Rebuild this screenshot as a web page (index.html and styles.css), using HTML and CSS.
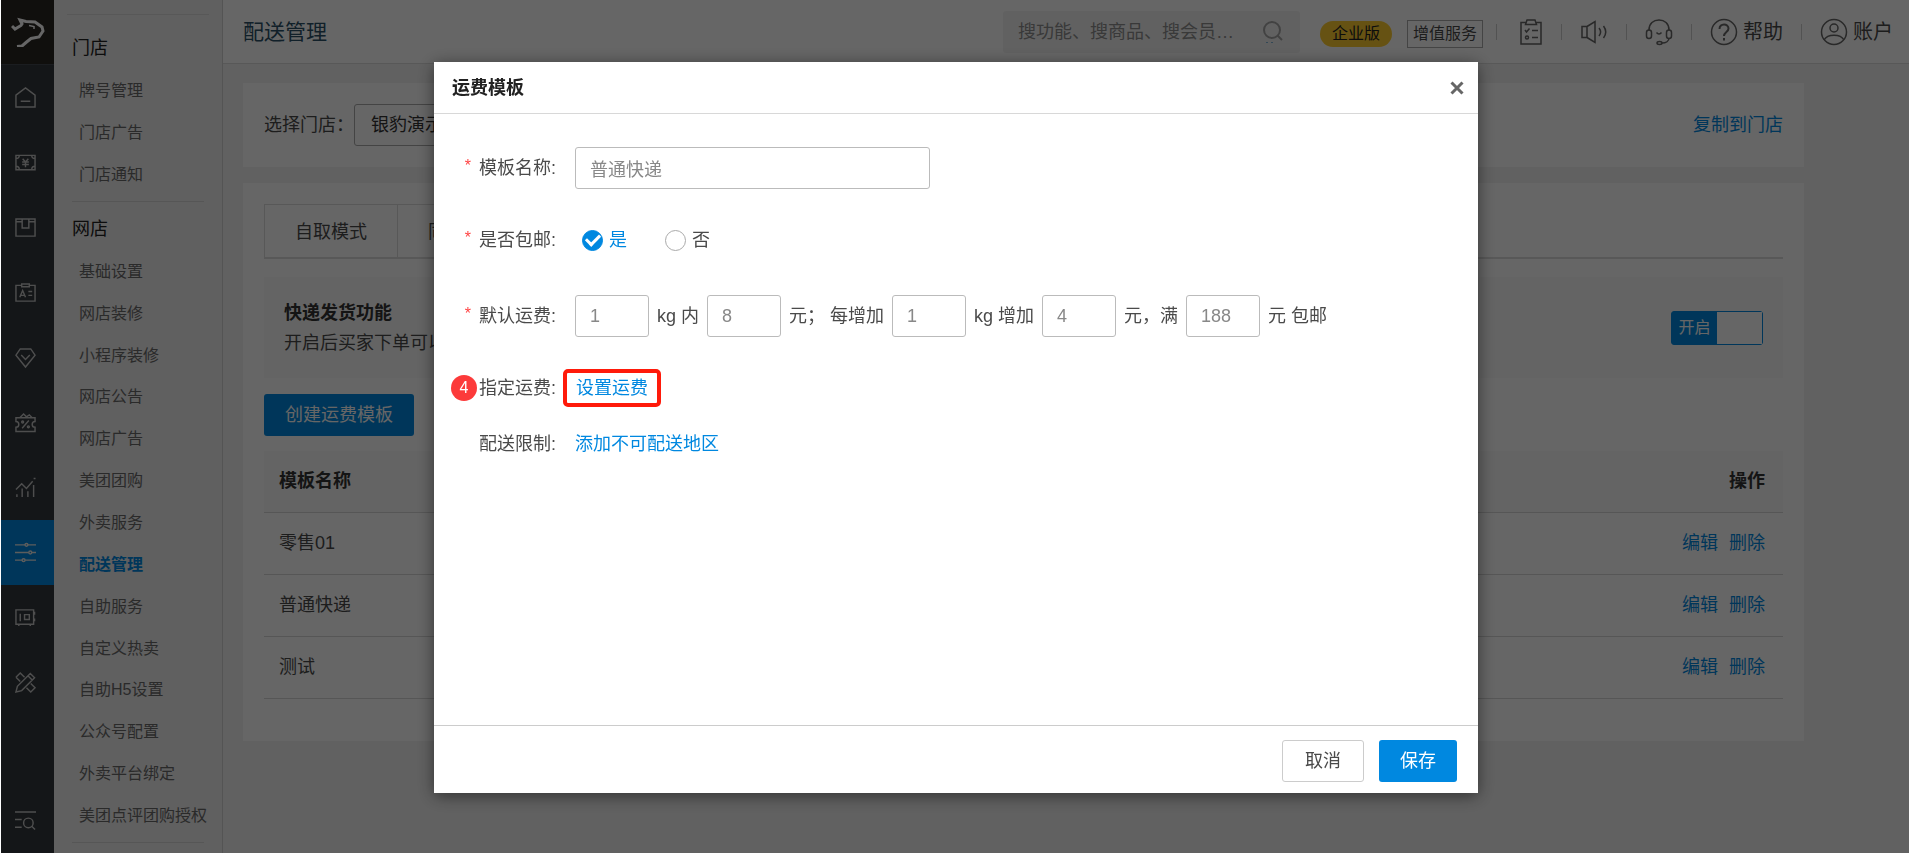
FILE: index.html
```html
<!DOCTYPE html>
<html lang="zh-CN">
<head>
<meta charset="utf-8">
<meta name="viewport" content="width=device-width, initial-scale=1">
<title>配送管理</title>
<link rel="stylesheet" href="styles.css">
</head>
<body>
<div class="app">
  <nav class="rail" aria-label="主导航">
    <a class="rail-logo" href="#" aria-label="首页">
      <svg width="34" height="30" viewBox="0 0 34 30" fill="none" stroke="currentColor" stroke-width="3"><path d="M1 9l3 3 6-3.500 1-1.500-2-4 6 1.500 9 .5 7 5 1 4-4 6-8 1.500-5 4-4 3.500-5 .5"/><path d="M18 8.500l5 1v2.500" stroke-width="1.500"/></svg>
    </a>
    <a class="rail-item" href="#" aria-label="主页"><svg class="rail-icon" viewBox="0 0 22 22"><path d="M1 8.500L11 1l10 7.500V21H1zM6 15h10"/></svg></a>
    <a class="rail-item" href="#" aria-label="收银"><svg class="rail-icon" viewBox="0 0 22 22"><path d="M1 3.500h20v15H1zM1 7c2 0 3.500-1.500 3.500-3.500M21 7c-2 0-3.500-1.500-3.500-3.500M1 15c2 0 3.500 1.500 3.500 3.500M21 15c-2 0-3.500 1.500-3.500 3.500M8 7l3 3.500L14 7M11 10.500V16M7.500 10.500h7M7.500 13h7"/></svg></a>
    <a class="rail-item" href="#" aria-label="商品"><svg class="rail-icon" viewBox="0 0 22 22"><path d="M1 2h20v18H1zM1 5h6M15 5h6M7.500 2v9.500h7V2"/></svg></a>
    <a class="rail-item" href="#" aria-label="会员"><svg class="rail-icon" viewBox="0 0 22 22"><path d="M7 3.500H1V20h20V3.500h-6M7 2h8v3H7zM5 16l3-7 3 7M6 14h4M14 10h4M14 14h4"/></svg></a>
    <a class="rail-item" href="#" aria-label="权益"><svg class="rail-icon" viewBox="0 0 22 22"><path d="M5.500 2h11L21 8.500 11 21 1 8.500zM6.500 8.500L11 13l4.500-4.500"/></svg></a>
    <a class="rail-item" href="#" aria-label="营销"><svg class="rail-icon" viewBox="0 0 22 22"><path d="M1 6h20v4c-2 0-3 1.200-3 3s1 3 3 3v4.500H1V16c2 0 3-1.200 3-3s-1-3-3-3zM5 6l4-4 3 3 3-2 3 3M7.500 17l7-8"/><circle cx="8" cy="10.500" r="1"/><circle cx="14" cy="15.500" r="1"/></svg></a>
    <a class="rail-item" href="#" aria-label="报表"><svg class="rail-icon" viewBox="0 0 22 22"><path d="M1 13l6-6 5 5 6.500-7.500M2 21v-3M7.500 21v-9M13.500 21v-6M19.500 21V8.500M19.500 1.500h2"/></svg></a>
    <a class="rail-item rail-item-active" href="#" aria-label="设置"><svg class="rail-icon" viewBox="0 0 22 22"><path d="M0 3h22M0 11h22M0 19h22"/><g class="rail-knob"><circle cx="12" cy="3" r="1.500"/><circle cx="16" cy="11" r="1.500"/><circle cx="9" cy="19" r="1.500"/></g></svg></a>
    <a class="rail-item" href="#" aria-label="保险柜"><svg class="rail-icon" viewBox="0 0 22 22"><path d="M1 3h18.500v15H1zM5.500 7v8M10 8h5v5h-5zM20.500 5v3M20.500 12v3M4 18v2M16 18v2"/></svg></a>
    <a class="rail-item" href="#" aria-label="工具"><svg class="rail-icon" viewBox="0 0 22 22"><path d="M1 21l1.500-6L16 1.500 20.500 6 7 19.500zM1 5.500L5.500 1 10 5.500M5.500 10L1 5.500M12 16.500l4.500 4.500 4.500-4.500-4.500-4.500M13.500 4l4.500 4.500"/></svg></a>
    <a class="rail-item rail-item-last" href="#" aria-label="查找功能"><svg class="rail-icon" viewBox="0 0 22 22"><path d="M0 2h22M0 10h7M0 18h7"/><circle cx="14" cy="13.500" r="5"/><path d="M17.500 17l3.500 3.500"/></svg></a>
  </nav>

  <aside class="side">
    <div class="side-top"></div>
    <section class="side-group">
      <h2 class="side-title">门店</h2>
      <ul class="side-list">
        <li><a href="#">牌号管理</a></li>
        <li><a href="#">门店广告</a></li>
        <li><a href="#">门店通知</a></li>
      </ul>
    </section>
    <section class="side-group side-group-fill">
      <h2 class="side-title">网店</h2>
      <ul class="side-list">
        <li><a href="#">基础设置</a></li>
        <li><a href="#">网店装修</a></li>
        <li><a href="#">小程序装修</a></li>
        <li><a href="#">网店公告</a></li>
        <li><a href="#">网店广告</a></li>
        <li><a href="#">美团团购</a></li>
        <li><a href="#">外卖服务</a></li>
        <li><a class="side-active" href="#">配送管理</a></li>
        <li><a href="#">自助服务</a></li>
        <li><a href="#">自定义热卖</a></li>
        <li><a href="#">自助H5设置</a></li>
        <li><a href="#">公众号配置</a></li>
        <li><a href="#">外卖平台绑定</a></li>
        <li><a href="#">美团点评团购授权</a></li>
      </ul>
    </section>
  </aside>

  <div class="page">
    <header class="top">
      <h1 class="top-title">配送管理</h1>
      <label class="search">
        <input class="search-input" type="search" aria-label="搜索" placeholder="搜功能、搜商品、搜会员…">
        <svg width="22" height="24" viewBox="0 0 22 24" fill="none" stroke="#a6a6a6" stroke-width="2"><circle cx="10" cy="10" r="8"/><path d="M15.500 15.500L20 20"/><path d="M4 22.500h2M9 22.500h2" stroke="#7fb4d8" stroke-width="1"/></svg>
      </label>
      <div class="plans">
        <span class="plan">企业版</span>
        <button class="service" type="button">增值服务</button>
      </div>
      <div class="tools">
        <a class="tool" href="#" aria-label="任务"><svg width="28" height="28" viewBox="0 0 28 28"><path d="M11 4.500H6V26h20V4.500h-5M12 2h8l1.500 4.500h-11zM10 12l1.500 2 3-3.500M17 12.500h6M17 19.500h6"/><circle cx="12" cy="19.500" r="1.500"/></svg></a>
        <a class="tool" href="#" aria-label="公告"><svg width="28" height="28" viewBox="0 0 28 28"><path d="M2 8.500h5v11H2zM7 8.500l8-5v21l-8-5M19 10c2 2.500 2 5.500 0 8M23.500 8c3 4 3 8 0 12"/></svg></a>
        <a class="tool" href="#" aria-label="客服"><svg width="28" height="28" viewBox="0 0 28 28"><path d="M4 12C4 5.500 8.500 2 14 2s10 3.500 10 10M24 20c0 3-3 5-7 5M11.500 14.500c1.500 2 3.500 2 5 0"/><rect x="1.500" y="12" width="5" height="8.500" rx="2.500"/><rect x="21.500" y="12" width="5" height="8.500" rx="2.500"/><ellipse cx="14.500" cy="25" rx="2.500" ry="1.500"/></svg></a>
        <a class="tool" href="#"><svg width="28" height="28" viewBox="0 0 28 28"><circle cx="14" cy="14" r="12.500"/><path d="M9.500 11c0-6 9-6 9-.5 0 3.500-4.500 3.500-4.500 7.500M14 20v2.500" stroke-width="2"/></svg>帮助</a>
        <a class="tool" href="#"><svg width="28" height="28" viewBox="0 0 28 28"><circle cx="14" cy="14" r="12.500"/><circle cx="14" cy="10" r="4"/><path d="M4 22c3.500-6.500 16.500-6.500 20 0"/></svg>账户</a>
      </div>
    </header>

    <main class="content">
      <section class="card store">
        <div class="store-pick">
          <label for="store">选择门店：</label>
          <select id="store" class="store-select"><option>银豹演示门店</option></select>
        </div>
        <a class="link" href="#">复制到门店</a>
      </section>

      <section class="card panel">
        <div class="tabs">
          <button class="tab" type="button">自取模式</button>
          <button class="tab" type="button">同城配送</button>
        </div>
        <div class="feature">
          <div>
            <h3 class="feature-title">快递发货功能</h3>
            <p class="feature-text">开启后买家下单可以选择快递发货</p>
          </div>
          <label class="switch"><input class="switch-input" type="checkbox" checked><span class="switch-text">开启</span><span class="switch-knob"></span></label>
        </div>
        <button class="btn btn-primary create" type="button">创建运费模板</button>
        <table class="table">
          <thead><tr><th>模板名称</th><th class="ops">操作</th></tr></thead>
          <tbody>
            <tr><td>零售01</td><td class="ops"><a class="link" href="#">编辑</a><a class="link" href="#">删除</a></td></tr>
            <tr><td>普通快递</td><td class="ops"><a class="link" href="#">编辑</a><a class="link" href="#">删除</a></td></tr>
            <tr><td>测试</td><td class="ops"><a class="link" href="#">编辑</a><a class="link" href="#">删除</a></td></tr>
          </tbody>
        </table>
      </section>
    </main>
  </div>
</div>

<div class="overlay">
  <div class="modal" role="dialog" aria-modal="true" aria-labelledby="dialog-title">
    <header class="modal-head">
      <h2 class="modal-title" id="dialog-title">运费模板</h2>
      <button class="modal-close" type="button" aria-label="关闭"><svg width="14" height="14" viewBox="0 0 14 14" fill="none" stroke="#666" stroke-width="3"><path d="M1.500 1.500l11 11M12.500 1.500l-11 11"/></svg></button>
    </header>
    <form class="form">
      <div class="row">
        <span class="star">*</span>
        <label for="name">模板名称:</label>
        <input class="field field-name" id="name" type="text" value="普通快递">
      </div>
      <div class="row" role="radiogroup" aria-labelledby="free-label">
        <span class="star">*</span>
        <span id="free-label">是否包邮:</span>
        <div class="radios">
          <label class="radio"><input type="radio" name="free" checked><span>是</span></label>
          <label class="radio"><input type="radio" name="free"><span>否</span></label>
        </div>
      </div>
      <div class="row row-fee">
        <span class="star">*</span>
        <label for="fee-weight">默认运费:</label>
        <div class="fees">
          <input class="field" id="fee-weight" type="text" value="1">
          <label for="fee-base">kg 内</label>
          <input class="field" id="fee-base" type="text" value="8">
          <label for="fee-step">元； 每增加</label>
          <input class="field" id="fee-step" type="text" value="1">
          <label for="fee-extra">kg 增加</label>
          <input class="field" id="fee-extra" type="text" value="4">
          <label for="fee-free">元，满</label>
          <input class="field" id="fee-free" type="text" value="188">
          <span>元 包邮</span>
        </div>
      </div>
      <div class="links">
        <div class="row">
          <span class="step">4</span>
          <span>指定运费:</span>
          <a class="link marked" href="#">设置运费</a>
        </div>
        <div class="row">
          <span></span>
          <span>配送限制:</span>
          <a class="link" href="#">添加不可配送地区</a>
        </div>
      </div>
    </form>
    <footer class="modal-foot">
      <button class="btn btn-plain" type="button">取消</button>
      <button class="btn btn-primary" type="button">保存</button>
    </footer>
  </div>
</div>
</body>
</html>
```
FILE: styles.css
```css
* { box-sizing: border-box; }
body {
  margin: 0;
  padding-left: 1px;
  background: #fff;
  color: #4a4a4a;
  font: 18px/26px "Liberation Sans", "Noto Sans CJK SC", sans-serif;
}
h1, h2, h3, p, ul { margin: 0; padding: 0; }
ul { list-style: none; }
a { color: inherit; text-decoration: none; }
button, input, select { font: inherit; color: inherit; }
button { cursor: pointer; }
.link { color: #0088e0; }

.app {
  display: flex;
  height: 100vh;
  overflow: hidden;
  background: #f3f3f3;
}

/* icon rail */
.rail {
  display: flex;
  flex-direction: column;
  flex: none;
  width: 53px;
  background: #32373c;
  color: #c4c4c4;
}
.rail-logo {
  display: flex;
  align-items: center;
  justify-content: center;
  flex: none;
  height: 65px;
  border-bottom: 1px solid #444a50;
  background: #282622;
  color: #fff;
}
.rail-item {
  display: flex;
  align-items: center;
  flex: none;
  height: 65px;
  padding-left: 14px;
}
.rail-item-active { background: #0088e0; color: #e8e8e8; }
.rail-item-last { margin-top: auto; }
.rail-icon {
  width: 21px;
  height: 21px;
  overflow: visible;
  fill: none;
  stroke: currentColor;
  stroke-width: 1.5;
}
.rail-knob { fill: #0088e0; }

/* secondary menu */
.side {
  display: flex;
  flex-direction: column;
  flex: none;
  width: 169px;
  padding: 14px 18px 10px 13px;
  border-right: 1px solid #d2d2d2;
  background: #efefef;
  color: #6a6a6a;
  font-size: 16px;
}
.side-top { flex: none; margin-right: -5px; border-top: 1px solid #ddd; }
.side-group {
  display: flex;
  flex-direction: column;
  margin-left: 5px;
  padding: 12px 0 5px;
  border-bottom: 1px solid #d6d6d6;
}
.side-group:nth-of-type(1) { padding-top: 18px; }
.side-group-fill { flex: 1; }
.side-title {
  flex: none;
  padding-bottom: 7px;
  color: #222;
  font-size: 18px;
  font-weight: 400;
  line-height: 30px;
}
.side-list {
  display: grid;
  flex: 1;
  grid-auto-rows: minmax(24px, 1fr);
  align-items: center;
  white-space: nowrap;
}
.side-group:nth-of-type(1) .side-list { grid-auto-rows: 42px; }
.side-list a { padding-left: 7px; }
.side-list .side-active { color: #0088e0; font-weight: 700; }

/* header */
.page { flex: 1; min-width: 0; }
.top {
  display: flex;
  align-items: center;
  height: 64px;
  padding: 0 16px 0 20px;
  border-bottom: 1px solid #ddd;
  background: #fff;
}
.top-title {
  flex: 1;
  color: #2c5068;
  font-size: 21px;
  font-weight: 400;
}
.search {
  display: flex;
  align-items: center;
  width: 297px;
  height: 42px;
  padding: 0 16px 0 15px;
  border-radius: 3px;
  background: #f3f3f3;
}
.search-input {
  flex: 1;
  min-width: 0;
  padding: 0;
  border: 0;
  outline: 0;
  background: none;
}
.search-input::placeholder { color: #8e8e8e; opacity: 1; }
.plans {
  display: flex;
  align-items: center;
  gap: 15px;
  padding: 4px 13px 0 20px;
  font-size: 16px;
}
.plan {
  padding: 0 12px;
  border-radius: 14px;
  background: #ffcd30;
  color: #222;
}
.service {
  padding: 0 5px;
  border: 1px solid #aaa;
  background: none;
  font-size: 16px;
}
.tools { display: flex; align-items: center; font-size: 20px; }
.tool {
  display: flex;
  align-items: center;
  gap: 5px;
  padding: 0 18px;
}
.tool:last-child { padding-right: 0; }
.tool::before {
  width: 1px;
  height: 16px;
  margin: 0 13px 0 -18px;
  background: #ccc;
  content: "";
}
.tool svg { fill: none; stroke: #666; stroke-width: 1.5; }

/* page content */
.content {
  display: flex;
  flex-direction: column;
  gap: 16px;
  padding: 19px 105px 0 20px;
}
.card { padding: 21px; background: #fff; }
.store { display: flex; align-items: center; justify-content: space-between; }
.store-pick { display: flex; align-items: center; }
.store-select {
  width: 260px;
  height: 42px;
  padding: 0 16px;
  border: 1px solid #aaa;
  border-radius: 3px;
  appearance: none;
  background: none;
  color: #333;
}
.panel { padding-bottom: 42px; }
.tabs { display: flex; border-bottom: 2px solid #ddd; }
.tab {
  height: 53px;
  margin-left: -1px;
  padding: 2px 30px 0;
  border: 1px solid #ddd;
  border-bottom: 0;
  background: none;
}
.tab:first-child { margin-left: 0; }
.feature {
  display: flex;
  align-items: center;
  justify-content: space-between;
  margin: 18px 0 16px;
  padding: 19px 20px;
  background: #fafafa;
}
.feature-title { padding-top: 2px; font-size: 18px; line-height: 30px; color: #333; }
.feature-text { line-height: 31px; }
.switch {
  display: flex;
  width: 92px;
  height: 34px;
  border: 1px solid #0088e0;
  border-radius: 3px;
  background: #0088e0;
  color: #fff;
  font-size: 16px;
  line-height: 32px;
}
.switch-input { position: absolute; opacity: 0; }
.switch-text { flex: 1; text-align: center; }
.switch-knob { flex: 1; background: #fff; }

.btn {
  height: 42px;
  padding: 0 20px;
  border: 1px solid transparent;
  border-radius: 3px;
}
.btn-primary { background: #0088e0; color: #fff; }
.btn-plain { border-color: #ccc; background: #fff; padding: 0 22px; }
.create { margin-bottom: 15px; }

.table { width: 100%; border-collapse: collapse; }
.table th, .table td {
  height: 62px;
  padding: 0 15px;
  border-bottom: 1px solid #d8d8d8;
  text-align: left;
}
.table th { height: 61px; background: #fafafa; color: #333; }
.table .ops { padding-right: 18px; text-align: right; }
.ops .link { margin-left: 11px; }

/* dialog */
.overlay {
  position: fixed;
  inset: 0 0 0 1px;
  display: flex;
  align-items: center;
  justify-content: center;
  padding: 2px 0 0 2px;
  background: rgba(0, 0, 0, .6);
}
.modal {
  width: 1044px;
  max-width: 100%;
  background: #fff;
  box-shadow: 0 3px 16px rgba(0, 0, 0, .5);
}
.modal-head {
  display: flex;
  align-items: center;
  justify-content: space-between;
  height: 52px;
  padding: 0 14px 0 18px;
  border-bottom: 1px solid #d8d8d8;
}
.modal-title { color: #222; font-size: 18px; }
.modal-close { display: flex; padding: 0; border: 0; background: none; }
.form {
  display: flex;
  flex-direction: column;
  gap: 30px;
  min-height: 611px;
  padding: 33px 20px 33px 0;
}
.row {
  display: grid;
  grid-template-columns: 45px 96px 1fr;
  align-items: center;
  justify-items: start;
  min-height: 42px;
}
.row-fee { margin-top: 4px; }
.links { display: flex; flex-direction: column; gap: 14px; }
.star { justify-self: end; padding: 0 8px 4px 0; color: #f44; font-size: 16px; }
.field {
  width: 74px;
  height: 42px;
  padding: 0 14px;
  border: 1px solid #bbb;
  border-radius: 3px;
  background: #fff;
  color: #888;
}
.field-name { width: 355px; }
.fees { display: flex; align-items: center; gap: 8px; white-space: nowrap; }
.radios { display: flex; gap: 38px; padding-left: 7px; }
.radio { display: flex; align-items: center; gap: 6px; }
.radio input {
  width: 21px;
  height: 21px;
  margin: 0;
  border: 1px solid #aaa;
  border-radius: 50%;
  appearance: none;
}
.radio input:checked {
  display: grid;
  place-items: center;
  border-color: #0088e0;
  background: #0088e0;
}
.radio input:checked::before {
  width: 11px;
  height: 6px;
  margin-bottom: 3px;
  border: solid #fff;
  border-width: 0 0 3px 3px;
  transform: rotate(-45deg);
  content: "";
}
.radio input:checked + span { color: #0088e0; }
.step {
  justify-self: end;
  width: 26px;
  height: 26px;
  margin-right: 2px;
  border-radius: 50%;
  background: #fc3a3a;
  color: #fff;
  font-size: 16px;
  text-align: center;
}
.marked {
  margin-left: -12px;
  padding: 2px 9px;
  border: 4px solid #ff1a0a;
  border-radius: 5px;
}
.modal-foot {
  display: flex;
  justify-content: flex-end;
  gap: 15px;
  padding: 14px 21px 11px;
  border-top: 1px solid #ccc;
}
```
